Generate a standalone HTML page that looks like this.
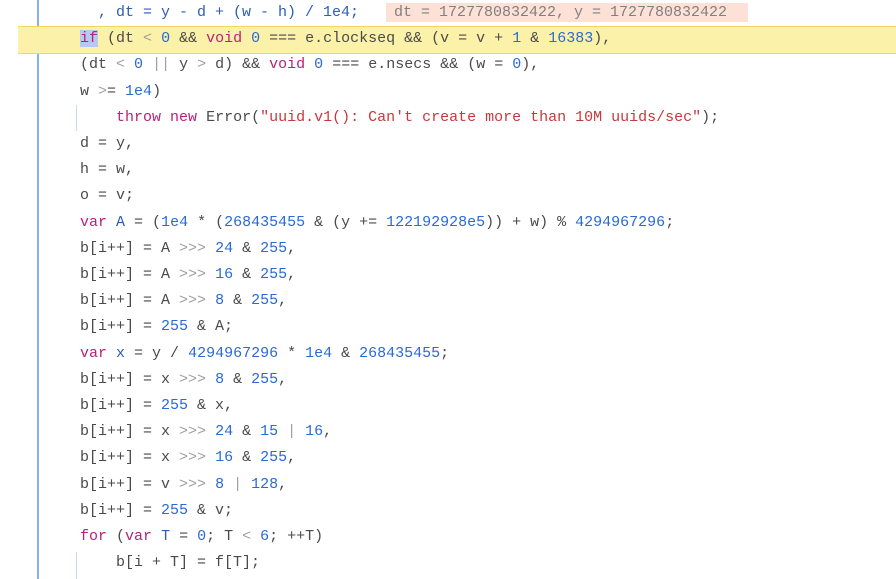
<!DOCTYPE html>
<html><head><meta charset="utf-8"><style>
html,body{margin:0;padding:0;background:#fff;width:896px;height:579px;overflow:hidden;position:relative;font-family:"Liberation Mono","Noto Sans CJK SC",monospace;font-size:15px;color:#4a4a4a}
.gut{position:absolute;left:37px;top:0;width:2px;height:579px;background:#8ab0f0}
.hl{position:absolute;left:18px;right:0;top:26px;height:26px;background:#fcf1a8;border-top:1px solid #f0d860;border-bottom:1px solid #f0d860}
.l{position:absolute;left:80px;height:26px;line-height:26px;white-space:pre}
.k{color:#b8207a}.n{color:#2a6ad6}.s{color:#c8383a}.o{color:#a0a0a0}.v{color:#2d5db4}
.ifb{background:#b7c9ef}
.box{position:absolute;left:386px;top:3px;width:362px;height:19px;background:#fde0d6;color:#808080;line-height:19px;white-space:pre;padding-left:8px;box-sizing:border-box}
.ig{position:absolute;left:76px;width:1px;background:#c8d8f4}
</style></head><body>
<div class="gut"></div>
<div class="hl"></div>
<div class="ig" style="top:105px;height:26px"></div>
<div class="ig" style="top:552px;height:27px"></div>
<div class="l v" style="top:0px">  , dt = y - d + (w - h) / 1e4;</div>
<div class="box">dt = 1727780832422, y = 1727780832422</div>
<div class="l" style="top:26.2px"><span class="k ifb">if</span> (dt <span class="o">&lt;</span> <span class="n">0</span> &amp;&amp; <span class="k">void</span> <span class="n">0</span> === e.clockseq &amp;&amp; (v = v + <span class="n">1</span> &amp; <span class="n">16383</span>),</div>
<div class="l" style="top:52.4px">(dt <span class="o">&lt;</span> <span class="n">0</span> <span class="o">||</span> y <span class="o">&gt;</span> d) &amp;&amp; <span class="k">void</span> <span class="n">0</span> === e.nsecs &amp;&amp; (w = <span class="n">0</span>),</div>
<div class="l" style="top:78.6px">w <span class="o">&gt;</span>= <span class="n">1e4</span>)</div>
<div class="l" style="top:104.8px">    <span class="k">throw</span> <span class="k">new</span> Error(<span class="s">"uuid.v1(): Can't create more than 10M uuids/sec"</span>);</div>
<div class="l" style="top:131px">d = y,</div>
<div class="l" style="top:157.2px">h = w,</div>
<div class="l" style="top:183.4px">o = v;</div>
<div class="l" style="top:209.6px"><span class="k">var</span> <span class="v">A</span> = (<span class="n">1e4</span> * (<span class="n">268435455</span> &amp; (y += <span class="n">122192928e5</span>)) + w) % <span class="n">4294967296</span>;</div>
<div class="l" style="top:235.8px">b[i++] = A <span class="o">&gt;&gt;&gt;</span> <span class="n">24</span> &amp; <span class="n">255</span>,</div>
<div class="l" style="top:262px">b[i++] = A <span class="o">&gt;&gt;&gt;</span> <span class="n">16</span> &amp; <span class="n">255</span>,</div>
<div class="l" style="top:288.2px">b[i++] = A <span class="o">&gt;&gt;&gt;</span> <span class="n">8</span> &amp; <span class="n">255</span>,</div>
<div class="l" style="top:314.4px">b[i++] = <span class="n">255</span> &amp; A;</div>
<div class="l" style="top:340.6px"><span class="k">var</span> <span class="v">x</span> = y / <span class="n">4294967296</span> * <span class="n">1e4</span> &amp; <span class="n">268435455</span>;</div>
<div class="l" style="top:366.8px">b[i++] = x <span class="o">&gt;&gt;&gt;</span> <span class="n">8</span> &amp; <span class="n">255</span>,</div>
<div class="l" style="top:393px">b[i++] = <span class="n">255</span> &amp; x,</div>
<div class="l" style="top:419.2px">b[i++] = x <span class="o">&gt;&gt;&gt;</span> <span class="n">24</span> &amp; <span class="n">15</span> <span class="o">|</span> <span class="n">16</span>,</div>
<div class="l" style="top:445.4px">b[i++] = x <span class="o">&gt;&gt;&gt;</span> <span class="n">16</span> &amp; <span class="n">255</span>,</div>
<div class="l" style="top:471.6px">b[i++] = v <span class="o">&gt;&gt;&gt;</span> <span class="n">8</span> <span class="o">|</span> <span class="n">128</span>,</div>
<div class="l" style="top:497.8px">b[i++] = <span class="n">255</span> &amp; v;</div>
<div class="l" style="top:524px"><span class="k">for</span> (<span class="k">var</span> <span class="v">T</span> = <span class="n">0</span>; T <span class="o">&lt;</span> <span class="n">6</span>; ++T)</div>
<div class="l" style="top:550.2px">    b[i + T] = f[T];</div>
</body></html>
